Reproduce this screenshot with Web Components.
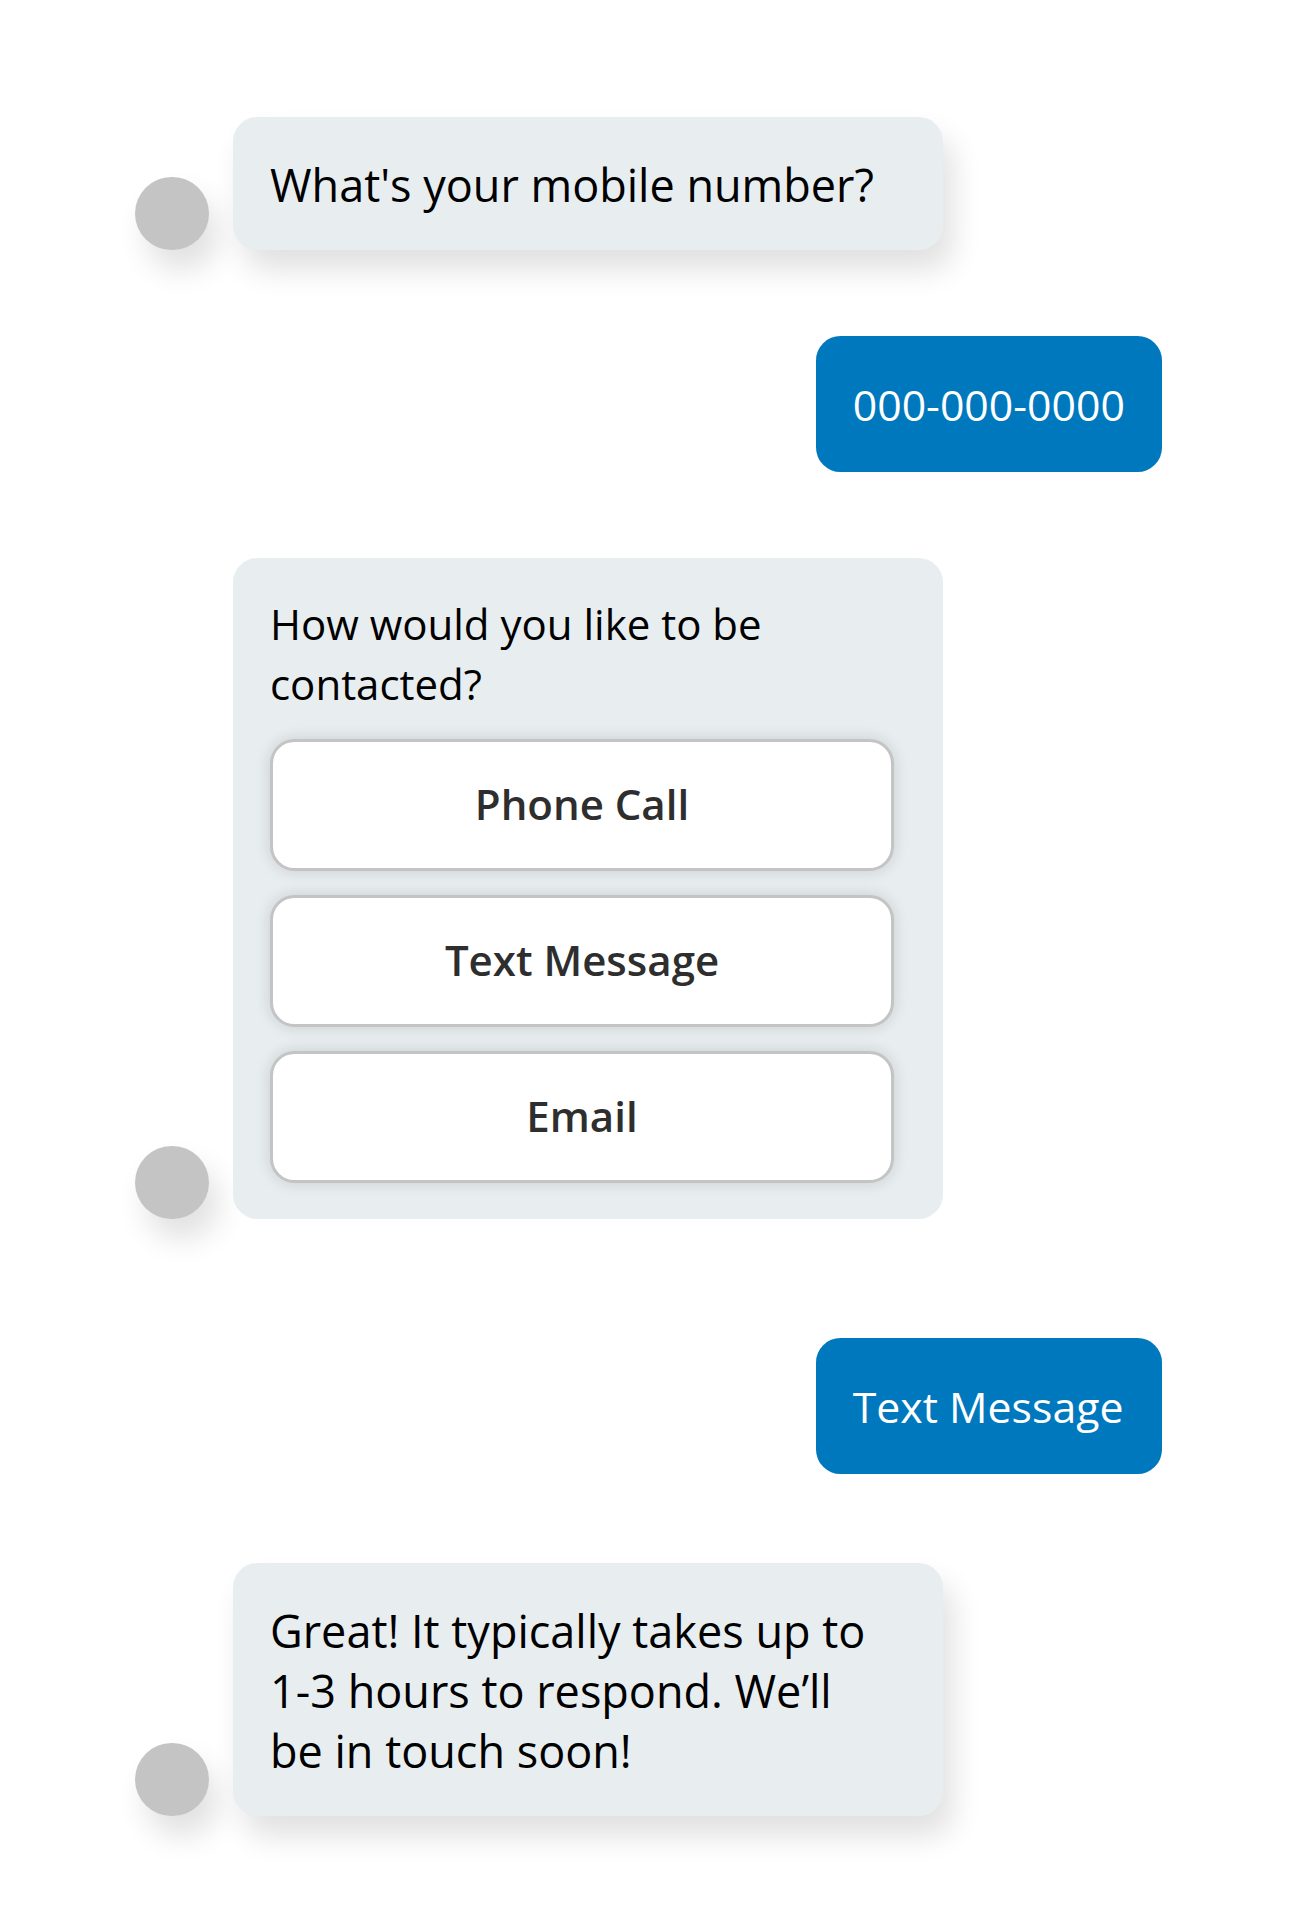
<!DOCTYPE html>
<html lang="en">
<head>
<meta charset="utf-8">
<title>Chat</title>
<style>
  body { margin: 0; background: #fff; font-family: "Open Sans", "Noto Sans", sans-serif; }
</style>
</head>
<body>
<chat-thread>
  <bot-message style="--size:45px;--lift:-1.3px">What's your mobile number?</bot-message>
  <user-message style="margin-top:85.7px">000-000-0000</user-message>
  <bot-message flat style="margin-top:85.7px;--size:42px;--lift:.7px">How would you like to be contacted?
    <choice-button slot="choices">Phone Call</choice-button>
    <choice-button slot="choices">Text Message</choice-button>
    <choice-button slot="choices">Email</choice-button>
  </bot-message>
  <user-message style="margin-top:118.7px">Text Message</user-message>
  <bot-message style="margin-top:88.7px;--size:45px;--lift:-1.3px">Great! It typically takes up to 1-3 hours to respond. We’ll be in touch soon!</bot-message>
</chat-thread>
<script>
const define = (name, html) => customElements.define(name, class extends HTMLElement {
  constructor() {
    super();
    this.attachShadow({ mode: "open" }).innerHTML = html;
  }
});

define("chat-thread", `
  <style>
    :host { display: flex; flex-direction: column; box-sizing: border-box; height: 1932px; padding: 117px 133.6px 0 135px; }
  </style>
  <slot></slot>`);

define("chat-avatar", `
  <style>
    :host { display: block; flex: none; width: 73.5px; height: 73.5px; border-radius: 50%; background: #c4c4c4;
      box-shadow: 10px 20px 30px rgba(0,0,0,.12); }
  </style>`);

define("bot-message", `
  <style>
    :host { display: flex; align-items: flex-end; gap: 24.5px; }
    .bubble { box-sizing: border-box; width: 710px; padding: 36.8px 49px 36.5px 37px; border-radius: 24.5px; background: #e8eef0;
      box-shadow: 10px 20px 30px rgba(0,0,0,.12); }
    :host([flat]) .bubble { box-shadow: none; padding-bottom: 36.5px; }
    p { margin: calc(-1 * var(--lift, 0px)) 0 0; color: #000; font-size: var(--size); line-height: 60px; width: 612px; }
    .choices { display: flex; flex-direction: column; gap: 24.3px; margin-top: var(--lift, 0px); }
    :host([flat]) .choices { margin-top: 24.9px; }
  </style>
  <chat-avatar></chat-avatar>
  <div class="bubble"><p><slot></slot></p><div class="choices"><slot name="choices"></slot></div></div>`);

define("user-message", `
  <style>
    :host { display: flex; align-self: flex-end; align-items: center; box-sizing: border-box; width: 346.4px; height: 136.4px;
      padding: 1.8px 36.7px 0; border-radius: 24.5px; background: #0078be; color: #fff; font-size: 42.8px; line-height: 60px; white-space: nowrap; }
  </style>
  <slot></slot>`);

define("choice-button", `
  <style>
    :host { display: block; }
    button { display: flex; justify-content: center; align-items: center; box-sizing: border-box; width: 624px; height: 131.7px; margin: 0;
      padding: 0 0 2.4px; border: 3px solid #c4c4c4; border-radius: 24.5px; background: #fff; color: #2e2e2e;
      font: 600 42px/60px "Open Sans", "Noto Sans", sans-serif;
      box-shadow: 0 0 15px rgba(0,0,0,.14); }
  </style>
  <button type="button"><slot></slot></button>`);
</script>
</body>
</html>
